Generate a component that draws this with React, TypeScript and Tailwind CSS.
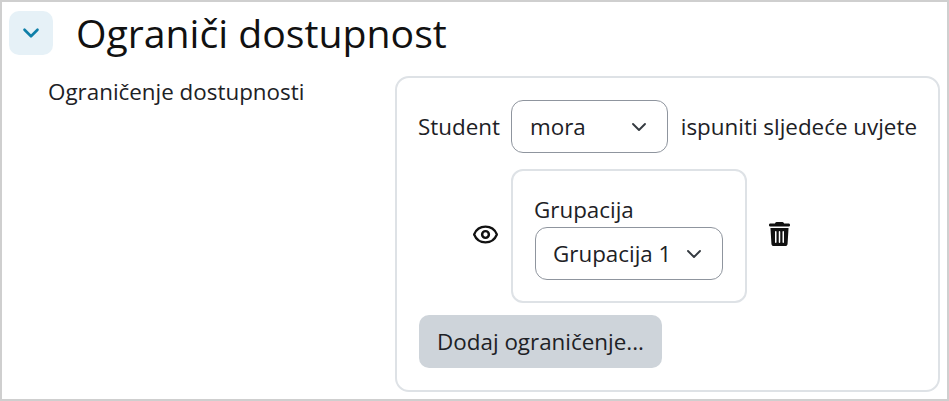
import { ChevronDown, Eye } from "lucide-react";

const Chevron = () => (
    <svg width="16" height="16" viewBox="0 0 16 16" fill="none" className="shrink-0">
        <path d="M2 5l6 6 6-6" stroke="#343a40" strokeWidth="1.9" strokeLinecap="round" strokeLinejoin="round" />
    </svg>
);

const Select = ({ label, className }: { label: string; className: string }) => (
    <div className={`flex h-[53px] items-center justify-between rounded-[12px] border-[1.5px] border-[#8f959e] bg-white pr-[20px] ${className}`}>
        <span>{label}</span>
        <Chevron />
    </div>
);

const TrashIcon = () => (
    <svg width="21" height="24" viewBox="0 0 448 512" fill="#111">
        <path d="M135 18C140 7 151 0 163 0h122c12 0 23 7 28 18l8 14h96c18 0 32 14 32 32s-14 32-32 32H31C13 96-1 82-1 64s14-32 32-32h96l8-14zM31 128h386l-21 339c-2 25-23 45-48 45H100c-25 0-46-20-48-45L31 128zm113 64c-9 0-16 7-16 16v224c0 9 7 16 16 16s16-7 16-16V208c0-9-7-16-16-16zm80 0c-9 0-16 7-16 16v224c0 9 7 16 16 16s16-7 16-16V208c0-9-7-16-16-16zm80 0c-9 0-16 7-16 16v224c0 9 7 16 16 16s16-7 16-16V208c0-9-7-16-16-16z" />
    </svg>
);

export default function App() {
    return (
        <div className="h-[401px] w-[949px] overflow-hidden border-2 border-[#cfcfcf] bg-white font-['Open_Sans','Noto_Sans',sans-serif] text-[22.4px] leading-[30px] text-[#1d2125]">
            <div className="ml-[7px] mt-[7px] flex items-center gap-[23px]">
                <button className="flex h-[44px] w-[44px] items-center justify-center rounded-[10px] bg-[#e6f1f7]">
                    <ChevronDown size={26} strokeWidth={2.4} color="#0f7fa8" />
                </button>
                <h2 className="text-[39.2px] leading-[48px] text-[#111]">Ograniči dostupnost</h2>
            </div>

            <div className="mt-[19px] flex">
                <div className="ml-[46px] w-[347px] pt-[1px]">Ograničenje dostupnosti</div>

                <div className="h-[316px] w-[545px] rounded-[14px] border-2 border-[#dee2e6] px-[21px] pt-[22px]">
                    <div className="flex items-center whitespace-nowrap">
                        <span className="w-[82px]">Student</span>
                        <Select label="mora" className="ml-[11px] w-[157px] pl-[18px]" />
                        <span className="ml-[13px]">ispuniti sljedeće uvjete</span>
                    </div>

                    <div className="mt-[16px] flex items-center">
                        <div className="mb-[4px] ml-[56px] mr-[15px] flex w-[22px] justify-center">
                            <Eye size={27} strokeWidth={2.2} color="#111" className="shrink-0" />
                        </div>
                        <div className="h-[134px] w-[236px] rounded-[12px] border-2 border-[#dee2e6] px-[22px] pt-[24px]">
                            <div className="-ml-px">Grupacija</div>
                            <Select label="Grupacija 1" className="mt-[2px] w-[188px] pl-[17px]" />
                        </div>
                        <div className="mb-[4px] ml-[22px] flex">
                            <TrashIcon />
                        </div>
                    </div>

                    <button className="ml-[1px] mt-[12px] flex h-[53px] w-[243px] items-center justify-center rounded-[10px] bg-[#ced4da]">
                        Dodaj ograničenje...
                    </button>
                </div>
            </div>
        </div>
    );
}
